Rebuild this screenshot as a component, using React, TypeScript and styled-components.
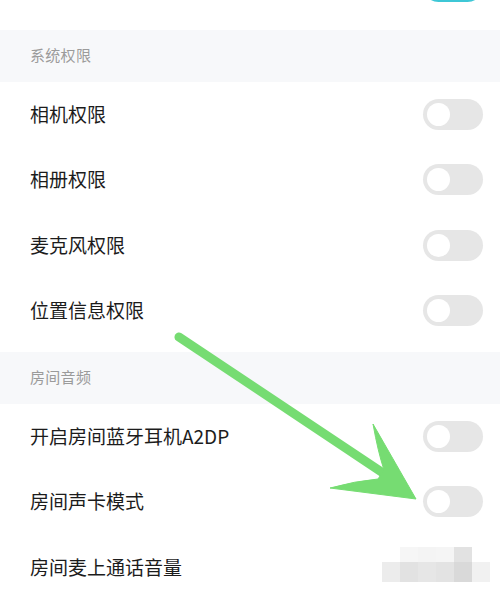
import React from "react";
import styled, { createGlobalStyle } from "styled-components";

const Global = createGlobalStyle`
  html, body { margin: 0; padding: 0; background: #ffffff; }
  body { font-family: "Noto Sans CJK SC", "Noto Sans", sans-serif; }
`;

const Page = styled.div`
  position: relative;
  width: 500px;
  height: 602px;
  overflow: hidden;
  background: #ffffff;
  display: flex;
  flex-direction: column;
`;

const PrevSection = styled.div`
  height: 30px;
  flex: none;
  overflow: hidden;
  display: flex;
  flex-direction: column;
  justify-content: flex-end;
  padding-bottom: 10px;
  box-sizing: border-box;
`;

const Section = styled.section`
  display: flex;
  flex-direction: column;
  padding-bottom: 8px;
  flex: none;
`;

const Header = styled.div`
  height: 52px;
  box-sizing: border-box;
  background: #f7f8fa;
  display: flex;
  align-items: center;
  padding: 0 0 3px 30px;
  font-size: 15px;
  color: #9b9b9b;
  letter-spacing: 0.3px;
`;

const Row = styled.div`
  height: 65.5px;
  box-sizing: border-box;
  flex: none;
  display: flex;
  align-items: center;
  justify-content: space-between;
  padding: 0 17px 0 30px;
`;

const Label = styled.span`
  font-size: 19px;
  color: #1c1c1c;
  margin-top: -3px;
`;

const Toggle = styled.div<{ $on?: boolean }>`
  width: 60px;
  height: 31px;
  border-radius: 16px;
  background: ${(p) => (p.$on ? "#3ec7d6" : "#e6e6e6")};
  display: flex;
  align-items: center;
  justify-content: ${(p) => (p.$on ? "flex-end" : "flex-start")};
  padding: 0 4px;
  box-sizing: border-box;
  margin-top: -1px;
`;

const Knob = styled.div`
  width: 23px;
  height: 23px;
  border-radius: 50%;
  background: #ffffff;
`;

const Mosaic = styled.div`
  display: grid;
  grid-template-columns: repeat(6, 18px);
  grid-template-rows: 15px 20px;
  margin-right: -7px;
  margin-top: -6px;
  filter: blur(0.6px);
`;

const Cell = styled.div<{ $c: string }>`
  background: ${(p) => p.$c};
`;

const Arrow = styled.svg`
  position: absolute;
  left: 0;
  top: 0;
  width: 500px;
  height: 602px;
  pointer-events: none;
`;

const mosaicColors = [
  "#ffffff", "#f6f6f6", "#f4f4f4", "#f5f5f5", "#e2e2e2", "#ffffff",
  "#ececec", "#e2e2e2", "#e6e6e6", "#e3e3e3", "#d9d9d9", "#f1f1f1",
];

const Switch = ({ on }: { on?: boolean }) => (
  <Toggle $on={on}>
    <Knob />
  </Toggle>
);

export default function App() {
  return (
    <>
      <Global />
      <Page>
        <PrevSection>
          <Row>
            <Label />
            <Switch on />
          </Row>
        </PrevSection>
        <Section>
          <Header>系统权限</Header>
          <Row>
            <Label>相机权限</Label>
            <Switch />
          </Row>
          <Row>
            <Label>相册权限</Label>
            <Switch />
          </Row>
          <Row>
            <Label>麦克风权限</Label>
            <Switch />
          </Row>
          <Row>
            <Label>位置信息权限</Label>
            <Switch />
          </Row>
        </Section>
        <Section>
          <Header>房间音频</Header>
          <Row>
            <Label>开启房间蓝牙耳机A2DP</Label>
            <Switch />
          </Row>
          <Row>
            <Label>房间声卡模式</Label>
            <Switch />
          </Row>
          <Row>
            <Label>房间麦上通话音量</Label>
            <Mosaic>
              {mosaicColors.map((c, i) => (
                <Cell key={i} $c={c} />
              ))}
            </Mosaic>
          </Row>
        </Section>
        <Arrow viewBox="0 0 500 602">
          <defs>
            <filter id="soft" x="-10%" y="-10%" width="120%" height="120%">
              <feGaussianBlur stdDeviation="0.6" />
            </filter>
          </defs>
          <g filter="url(#soft)" fill="#76dc72" stroke="#76dc72">
            <line x1="179" y1="337" x2="386" y2="475" strokeWidth="9" strokeLinecap="round" />
            <path
              d="M416 499 L373 424 Q378 452 384 470 L378 479 Q355 481 330 488 Z"
              strokeWidth="1"
              strokeLinejoin="round"
            />
          </g>
        </Arrow>
      </Page>
    </>
  );
}
